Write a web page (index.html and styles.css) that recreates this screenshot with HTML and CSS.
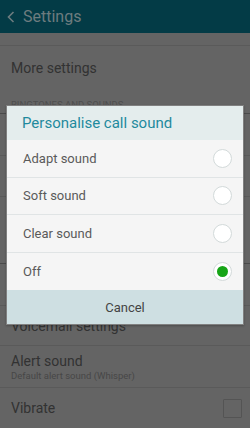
FILE: index.html
```html
<!DOCTYPE html>
<html lang="en">
<head>
    <meta charset="UTF-8">
    <meta name="viewport" content="width=device-width, initial-scale=1.0">
    <title>Settings</title>
    <link rel="stylesheet" href="styles.css">
</head>
<body>
    <!-- app bar -->
    <header class="app-bar">
        <svg class="back" width="8" height="12" viewBox="0 0 8 12">
            <path d="M6.5 1 L1.5 6 L6.5 11" fill="none" stroke="#6d7c7f" stroke-width="1.6"/>
        </svg>
        <span class="app-title">Settings</span>
    </header>

    <!-- settings list (dimmed behind the dialog) -->
    <div class="list">
        <div class="row row-short"></div>
        <div class="row row-more"><span class="row-title">More settings</span></div>
        <div class="section">Ringtones and sounds</div>
        <div class="row row-a"></div>
        <div class="row row-b"></div>
        <div class="row row-c"></div>
        <div class="row row-d"></div>
        <div class="row row-voice"><span class="row-title">Voicemail settings</span></div>
        <div class="row row-alert">
            <span class="row-title">Alert sound</span>
            <span class="row-sub">Default alert sound (Whisper)</span>
        </div>
        <div class="row row-vibrate">
            <span class="row-title">Vibrate</span>
            <span class="checkbox"></span>
        </div>
    </div>

    <!-- dialog -->
    <div class="overlay">
        <div class="dialog">
            <div class="dialog-title">Personalise call sound</div>
            <div class="option"><span>Adapt sound</span><span class="radio"></span></div>
            <div class="option"><span>Soft sound</span><span class="radio"></span></div>
            <div class="option"><span>Clear sound</span><span class="radio"></span></div>
            <div class="option last"><span>Off</span><span class="radio checked"></span></div>
            <div class="dialog-cancel">Cancel</div>
        </div>
    </div>
</body>
</html>
```

FILE: styles.css
```css
* {
    margin: 0;
    padding: 0;
    box-sizing: border-box;
}

body {
    width: 250px;
    height: 428px;
    overflow: hidden;
    background: #646464;
    font-family: Roboto, 'Liberation Sans', sans-serif;
    position: relative;
}

/* app bar */
.app-bar {
    height: 33px;
    background: #033b46;
    display: flex;
    align-items: center;
    padding-left: 7px;
}

.back {
    margin-right: 8px;
}

.app-title {
    color: #6d7c7f;
    font-size: 16px;
}

/* list */
.row {
    border-bottom: 1px solid #5a5a5a;
    display: flex;
    flex-direction: column;
    justify-content: center;
    padding: 0 11px;
}

.row-short { height: 13px; }
.row-more { height: 44px; border-bottom: none; }
.row-a { height: 42px; }
.row-b { height: 41px; }
.row-c { height: 67px; border-bottom-color: #4a4a4a; }
.row-d { height: 42px; }
.row-voice { height: 40px; }
.row-alert { height: 42px; }
.row-vibrate {
    height: 40px;
    border-bottom: none;
    flex-direction: row;
    align-items: center;
    justify-content: space-between;
    padding-right: 8px;
}

.row-title {
    color: #323232;
    font-size: 14px;
}

.row-sub {
    color: #474747;
    font-size: 9.5px;
    margin-top: 1px;
}

.section {
    height: 24px;
    padding: 9px 11px 0;
    font-size: 9.5px;
    text-transform: uppercase;
    color: #4e4e4e;
    border-bottom: 1px solid #4a4a4a;
}

.checkbox {
    width: 19px;
    height: 19px;
    border: 1px solid #545454;
    border-radius: 1px;
}

/* dialog */
.overlay {
    position: absolute;
    top: 0;
    left: 0;
    width: 100%;
    height: 100%;
}

.dialog {
    position: absolute;
    top: 105px;
    left: 6px;
    width: 238px;
    border: 1px solid #808080;
    background: #f5f5f5;
    box-shadow: 0 1px 2px rgba(0,0,0,0.25);
}

.dialog-title {
    height: 34px;
    background: #e4eded;
    color: #1f8a9d;
    font-size: 15px;
    display: flex;
    align-items: center;
    padding-left: 15px;
}

.option {
    height: 37.5px;
    border-bottom: 1px solid #e0e4e5;
    display: flex;
    align-items: center;
    justify-content: space-between;
    padding: 0 11px 0 16px;
    color: #5a5a5a;
    font-size: 13px;
}

.option.last {
    border-bottom: none;
}

.radio {
    width: 19px;
    height: 19px;
    border-radius: 50%;
    border: 1px solid #d3dada;
    background: #fff;
    display: flex;
    align-items: center;
    justify-content: center;
}

.radio.checked::after {
    content: '';
    width: 11px;
    height: 11px;
    border-radius: 50%;
    background: #17a517;
}

.dialog-cancel {
    height: 34px;
    background: #cedfe2;
    color: #444;
    font-size: 13px;
    display: flex;
    align-items: center;
    justify-content: center;
}
```
